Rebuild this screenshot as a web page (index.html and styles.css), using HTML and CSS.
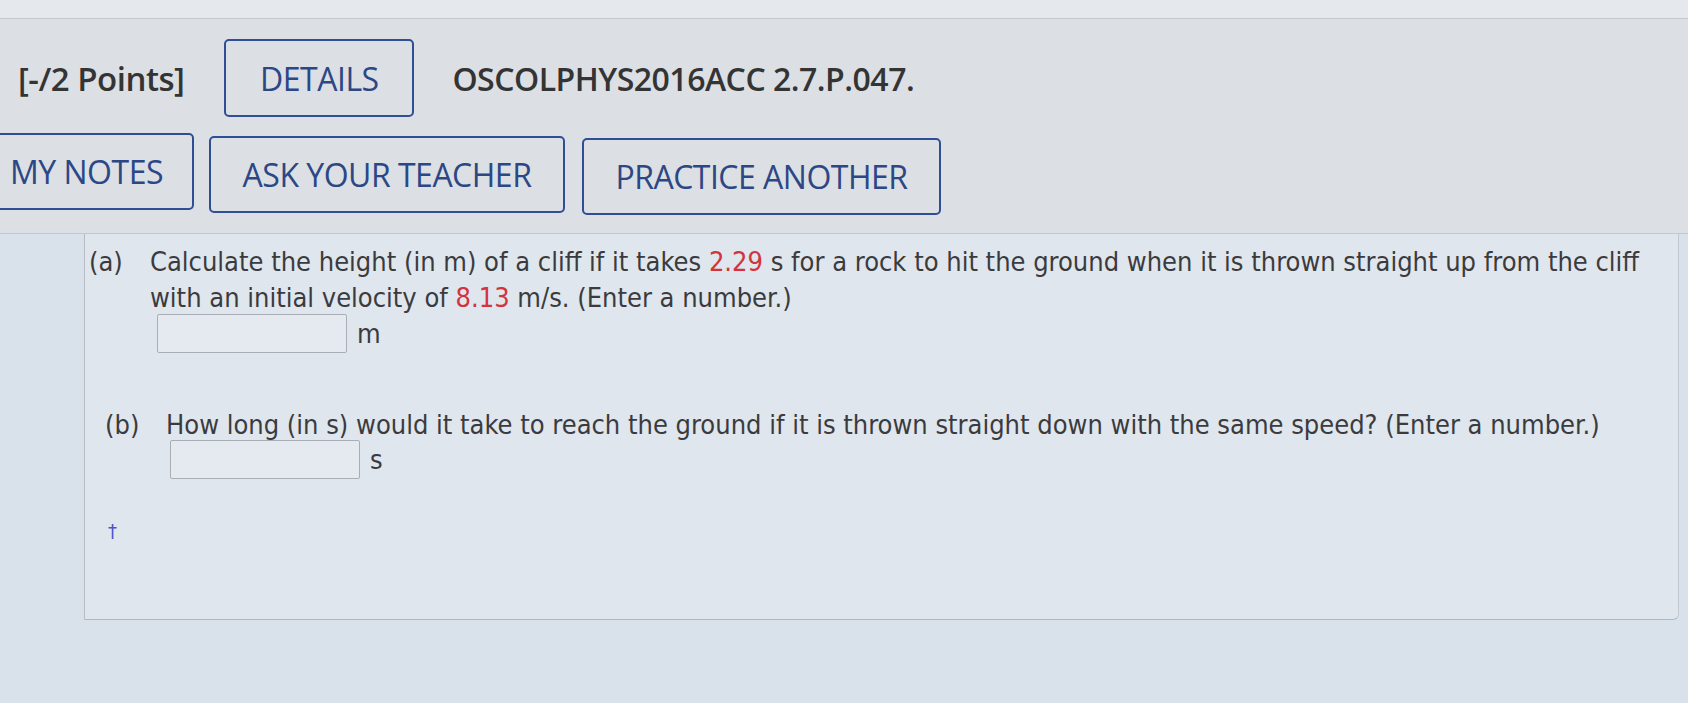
FILE: index.html
```html
<!DOCTYPE html>
<html>
<head>
<meta charset="utf-8">
<link rel="stylesheet" href="styles.css">
</head>
<body>
<div class="topstrip"></div>
<div class="header">
  <div class="row row1">
    <span class="points">[-/2 Points]</span>
    <span class="btn btn-details">DETAILS</span>
    <span class="qid">OSCOLPHYS2016ACC 2.7.P.047.</span>
  </div>
  <div class="row row2">
    <span class="btn btn-notes">MY NOTES</span>
    <span class="btn btn-ask">ASK YOUR TEACHER</span>
    <span class="btn btn-practice">PRACTICE ANOTHER</span>
  </div>
</div>
<div class="content">
  <div class="qbox">
    <div class="part part-a">
      <span class="label">(a)</span>
      <div class="ptext">
        <p>Calculate the height (in m) of a cliff if it takes <span class="num">2.29</span> s for a rock to hit the ground when it is thrown straight up from the cliff<br>with an initial velocity of <span class="num">8.13</span> m/s. (Enter a number.)</p>
        <div class="answer"><span class="inp"></span><span class="unit">m</span></div>
      </div>
    </div>
    <div class="part part-b">
      <span class="label">(b)</span>
      <div class="ptext">
        <p>How long (in s) would it take to reach the ground if it is thrown straight down with the same speed? (Enter a number.)</p>
        <div class="answer"><span class="inp"></span><span class="unit">s</span></div>
      </div>
    </div>
    <div class="dagger">†</div>
  </div>
</div>
</body>
</html>
```
FILE: styles.css
```css
html, body {
  margin: 0;
  padding: 0;
}
body {
  width: 1688px;
  height: 703px;
  overflow: hidden;
  background: #d9e1ea;
  font-family: "Open Sans", "DejaVu Sans", sans-serif;
  color: #363636;
}
.topstrip {
  height: 18px;
  background: #e5e8ec;
  border-bottom: 1px solid #c6cacf;
}
.header {
  height: 214px;
  background: #dcdfe3;
  border-bottom: 1px solid #c3c7cc;
  display: flex;
  flex-direction: column;
}
.row {
  display: flex;
  align-items: flex-start;
}
.row1 {
  margin-top: 20px;
  padding-left: 18px;
  align-items: center;
}
.row2 {
  margin-top: 16px;
}
.points, .qid {
  font-size: 33px;
  font-weight: 600;
  color: #343434;
  letter-spacing: -0.5px;
}
.qid {
  font-size: 32px;
  margin-left: 38px;
}
.btn {
  box-sizing: border-box;
  height: 77px;
  display: flex;
  align-items: center;
  justify-content: center;
  border: 2px solid #2e4f96;
  border-radius: 5px;
  font-size: 32px;
  color: #2c4785;
  letter-spacing: -0.5px;
}
.btn-details {
  width: 190px;
  height: 78px;
  margin-left: 40px;
}
.btn-notes {
  width: 199px;
  margin-left: -5px;
  padding-right: 16px;
}
.btn-ask {
  width: 356px;
  margin-left: 15px;
  margin-top: 3px;
}
.btn-practice {
  width: 359px;
  margin-left: 17px;
  margin-top: 5px;
}
.content {
  padding-left: 84px;
  padding-right: 9px;
}
.qbox {
  box-sizing: border-box;
  height: 386px;
  background: #dfe6ed;
  border-left: 1px solid #b7bcc3;
  border-right: 1px solid #c3c8ce;
  border-bottom: 1.5px solid #b3b8bf;
  border-bottom-right-radius: 6px;
  padding-top: 10px;
  font-family: "DejaVu Sans Condensed", "DejaVu Sans", sans-serif;
  font-size: 27px;
  color: #3b3b3e;
  white-space: nowrap;
}
.part {
  display: flex;
}
.label {
  flex: 0 0 61px;
  line-height: 36px;
}
.part-a {
  padding-left: 4px;
}
.part-b {
  margin-top: 54px;
  padding-left: 20px;
}
.ptext p {
  margin: 0;
  line-height: 36px;
}
.num {
  color: #d2343c;
}
.answer {
  display: flex;
  align-items: center;
  margin-top: -2px;
  margin-left: 7px;
}
.part-b .answer {
  margin-top: -3px;
  margin-left: 4px;
}
.inp {
  box-sizing: border-box;
  width: 190px;
  height: 39px;
  background: #e4eaf0;
  border: 1px solid #a9aeb5;
  border-radius: 2px;
}
.unit {
  margin-left: 10px;
}
.dagger {
  margin-top: 40px;
  padding-left: 23px;
  color: #4a55c8;
  font-size: 20px;
}
```
